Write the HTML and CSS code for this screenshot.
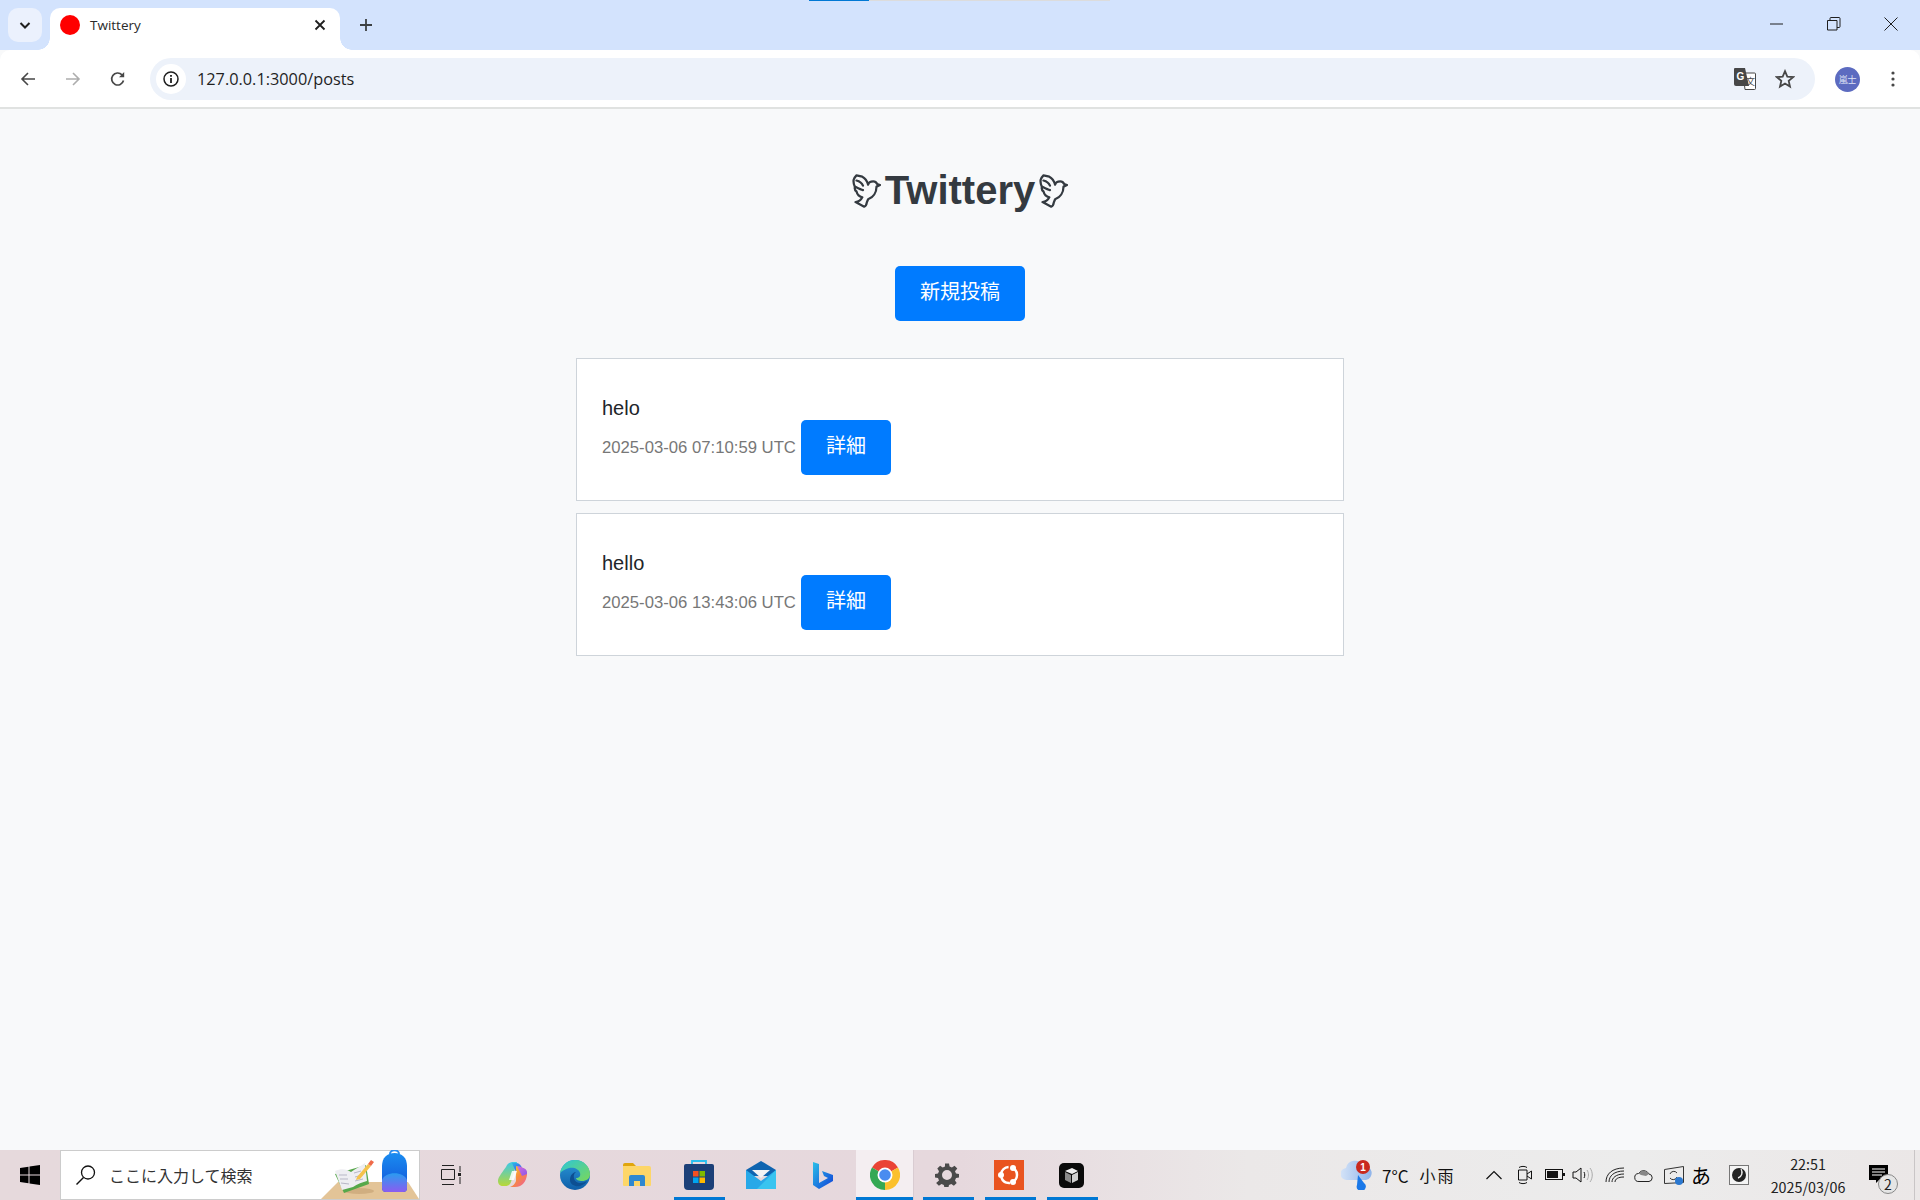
FILE: index.html
```html
<!DOCTYPE html>
<html lang="ja">
<head>
<meta charset="utf-8">
<title>Twittery</title>
<link rel="stylesheet" href="styles.css">
</head>
<body>
<div class="screen">
  <header class="chrome">
    <div class="tabstrip">
      <button class="tab-search">
        <svg width="16" height="16" viewBox="0 0 16 16"><path d="M3.500 6l4.500 4.500L12.500 6" fill="none" stroke="#1f1f1f" stroke-width="2"/></svg>
      </button>
      <div class="tab">
        <span class="favicon"></span>
        <span class="tab-title">Twittery</span>
        <svg class="tab-close" width="14" height="14" viewBox="0 0 14 14"><path d="M2.500 2.500l9 9M11.500 2.500l-9 9" stroke="#1f1f1f" stroke-width="1.800"/></svg>
      </div>
      <svg class="new-tab" width="16" height="16" viewBox="0 0 16 16"><path d="M8 2v12M2 8h12" stroke="#3c4043" stroke-width="1.800"/></svg>
      <div class="window-controls">
        <svg width="14" height="14" viewBox="0 0 14 14"><path d="M0 7h13" stroke="#1f1f1f" stroke-width="1"/></svg>
        <svg width="14" height="14" viewBox="0 0 14 14"><path d="M.5 3.500h9.500v9.500h-9.500zM3 3.500V1.500a1 1 0 0 1 1-1h8a1 1 0 0 1 1 1v8a1 1 0 0 1-1 1h-2" fill="none" stroke="#1f1f1f"/></svg>
        <svg width="14" height="14" viewBox="0 0 14 14"><path d="M.5.500l13 13M13.500.500l-13 13" stroke="#1f1f1f" stroke-width="1"/></svg>
      </div>
      <div class="sysbar"><span class="sysbar-blue"></span><span class="sysbar-gray"></span></div>
    </div>
    <div class="toolbar">
      <div class="nav-buttons">
        <svg width="16" height="16" viewBox="0 0 16 16"><path d="M15 8H2M8 2L2 8l6 6" fill="none" stroke="#474747" stroke-width="1.600"/></svg>
        <svg width="16" height="16" viewBox="0 0 16 16"><path d="M1 8h13M8 2l6 6-6 6" fill="none" stroke="#adadad" stroke-width="1.600"/></svg>
        <svg width="16" height="16" viewBox="0 0 16 16"><path d="M13.500 9.500A6 6 0 1 1 12 3.800" fill="none" stroke="#474747" stroke-width="1.700"/><path d="M14.200 1v5.200H9z" fill="#474747"/></svg>
      </div>
      <div class="omnibox">
        <span class="site-info">
          <svg width="16" height="16" viewBox="0 0 16 16"><circle cx="8" cy="8" r="7" fill="none" stroke="#1f1f1f" stroke-width="1.500"/><path d="M8 7v5M8 4v1.800" stroke="#1f1f1f" stroke-width="1.800"/></svg>
        </span>
        <span class="url">127.0.0.1:3000/posts</span>
        <svg class="translate" width="22" height="22" viewBox="0 0 22 22">
          <path d="M9 5h11.500a1 1 0 0 1 1 1v14.500a1 1 0 0 1-1 1H11z" fill="#fff" stroke="#474747"/>
          <path d="M1 0h10l4 18H2a2 2 0 0 1-2-2V1a1 1 0 0 1 1-1z" fill="#474747"/>
          <text x="2.500" y="12" class="translate-g">G</text>
          <text x="12" y="17" class="translate-k">文</text>
        </svg>
        <svg class="star" width="20" height="20" viewBox="0 0 20 20"><path d="M10 2.200l2.300 5.400 5.800.500-4.400 3.800 1.300 5.700-5-3-5 3 1.300-5.700-4.400-3.800 5.800-.500z" fill="none" stroke="#474747" stroke-width="1.800"/></svg>
      </div>
      <span class="avatar">嵐士</span>
      <svg class="kebab" width="4" height="16" viewBox="0 0 4 16"><circle cx="2" cy="2" r="1.600" fill="#474747"/><circle cx="2" cy="8" r="1.600" fill="#474747"/><circle cx="2" cy="14" r="1.600" fill="#474747"/></svg>
    </div>
  </header>

  <main class="page">
    <h1 class="title">
      <svg class="dove" width="29" height="34" viewBox="0 0 90 105"><path d="M14 4L32 8C42 13 47 22 50 33C52 26 58 23 66 23C72 23 76 27 78 31L87 34L76 39C76 56 66 72 50 78L46 88C45 95 42 100 38 101L11 87C22 86 28 80 32 72C22 70 16 62 14 54C8 50 8 44 9 40C6 34 4 26 5 18C6 12 10 8 14 4ZM14 20C22 22 30 26 34 36M12 40C20 44 28 48 34 50" fill="none" stroke="#343a40" stroke-width="7" stroke-linejoin="round" stroke-linecap="round"/></svg>
      <span class="title-text">Twittery</span>
      <svg class="dove" width="29" height="34" viewBox="0 0 90 105"><path d="M14 4L32 8C42 13 47 22 50 33C52 26 58 23 66 23C72 23 76 27 78 31L87 34L76 39C76 56 66 72 50 78L46 88C45 95 42 100 38 101L11 87C22 86 28 80 32 72C22 70 16 62 14 54C8 50 8 44 9 40C6 34 4 26 5 18C6 12 10 8 14 4ZM14 20C22 22 30 26 34 36M12 40C20 44 28 48 34 50" fill="none" stroke="#343a40" stroke-width="7" stroke-linejoin="round" stroke-linecap="round"/></svg>
    </h1>
    <a class="btn btn-new">新規投稿</a>
    <section class="posts">
      <article class="post">
        <p class="post-body">helo</p>
        <div class="post-meta">
          <time class="post-time">2025-03-06 07:10:59 UTC</time>
          <a class="btn btn-detail">詳細</a>
        </div>
      </article>
      <article class="post">
        <p class="post-body">hello</p>
        <div class="post-meta">
          <time class="post-time">2025-03-06 13:43:06 UTC</time>
          <a class="btn btn-detail">詳細</a>
        </div>
      </article>
    </section>
  </main>

  <footer class="taskbar">
    <div class="start">
      <svg width="20" height="20" viewBox="0 0 20 20"><path d="M0 3l8.500-1.200v7.700H0zM9.500 1.600L20 0v9.500H9.500zM0 10.500h8.500v7.700L0 17zM9.500 10.500H20V20L9.500 18.400z" fill="#000"/></svg>
    </div>
    <div class="search">
      <svg class="search-icon" width="22" height="22" viewBox="0 0 22 22"><circle cx="13" cy="8.500" r="6.500" fill="none" stroke="#111" stroke-width="1.300"/><path d="M8.500 13.500L1.500 20.500" stroke="#111" stroke-width="1.500"/></svg>
      <span class="search-text">ここに入力して検索</span>
      <svg class="search-art" width="98" height="49" viewBox="0 0 98 49">
        <defs>
          <linearGradient id="bag" x1="0" y1="0" x2="0" y2="1"><stop offset="0" stop-color="#1a8cf0"/><stop offset="1" stop-color="#1250d8"/></linearGradient>
          <linearGradient id="pocket" x1="0" y1="0" x2="0" y2="1"><stop offset="0" stop-color="#2a9cf0"/><stop offset="1" stop-color="#8b5cf0"/></linearGradient>
        </defs>
        <path d="M17 32h70l11 17H0z" fill="#e3c497"/>
        <ellipse cx="38" cy="41" rx="15" ry="3" fill="#d0ae80"/>
        <path d="M14 24L45 15L48 34L23 43z" fill="#56a84a"/>
        <path d="M14 21C20 18 26 19 30 22C34 19 40 16 44 13L46 31C42 32 36 34 32 37L21 40z" fill="#eeeef2"/>
        <path d="M18 25l8 0M19 29l8 0M20 33l8 1M33 23l7-2M34 27l7-2M34 31l8-2" stroke="#b7b7c6" stroke-width="1"/>
        <path d="M36 27l11-13 3 2-11 13-4 1z" fill="#f5c24c"/>
        <path d="M47 14l3-4 3 2-3 4z" fill="#ef6a4a"/>
        <path d="M61 16c0-8 5-13 12.500-13s12.500 5 12.500 13v22c0 3-2 4-4 4H65c-2 0-4-1-4-4z" fill="url(#bag)"/>
        <path d="M69 4c0-5 9-5 9 0" fill="none" stroke="#2a8cf0" stroke-width="2"/>
        <path d="M61 30c3-9 22-9 25 0v8c0 3-2 4-4 4H65c-2 0-4-1-4-4z" fill="url(#pocket)"/>
      </svg>
    </div>
    <div class="apps">
      <div class="app">
        <svg width="20" height="20" viewBox="0 0 20 20"><path d="M1 .500h12M1 19.500h12M.5 4.500h13v10H.5zM19 1v6M19 12v7" fill="none" stroke="#222" stroke-width="1"/><rect x="17" y="8" width="3" height="3" fill="#222"/></svg>
      </div>
      <div class="app">
        <svg width="30" height="26" viewBox="0 0 30 26">
          <defs>
            <linearGradient id="cp1" x1="0" y1="0" x2="1" y2="1"><stop offset="0" stop-color="#2bb8e8"/><stop offset=".5" stop-color="#3a7bea"/><stop offset="1" stop-color="#6f4bd8"/></linearGradient>
            <linearGradient id="cp2" x1="0" y1="0" x2="1" y2="1"><stop offset="0" stop-color="#f5d33c"/><stop offset=".5" stop-color="#f78a3c"/><stop offset="1" stop-color="#ee5aa8"/></linearGradient>
            <linearGradient id="cp3" x1="0" y1="0" x2="0" y2="1"><stop offset="0" stop-color="#3cc8e8"/><stop offset="1" stop-color="#b9d838"/></linearGradient>
            <linearGradient id="cp4" x1="0" y1="0" x2="1" y2="1"><stop offset="0" stop-color="#d86be0"/><stop offset="1" stop-color="#8a56e8"/></linearGradient>
          </defs>
          <path d="M8 5C10 1 12 0 16 0h3l-6 20c-1 3-3 4-6 4H5C2 24 0 22 0 19c0-3 2-6 8-14z" fill="url(#cp3)"/>
          <path d="M14 1h4c3 0 5 2 6 5l1 4h-7z" fill="url(#cp1)"/>
          <path d="M18 4c4 1 12 2 11 9-1 6-4 12-12 12h-5c3-1 5-3 6-6z" fill="url(#cp2)"/>
          <path d="M19 4c4 1 11 2 10 8l-5 2z" fill="url(#cp4)"/>
          <path d="M14 9h5l-3 9h-5z" fill="#fff" opacity=".85"/>
        </svg>
      </div>
      <div class="app">
        <svg width="30" height="30" viewBox="0 0 30 30">
          <defs>
            <linearGradient id="ed1" x1="0" y1="0" x2="1" y2="1"><stop offset="0" stop-color="#2cc6d8"/><stop offset="1" stop-color="#7ad858"/></linearGradient>
            <linearGradient id="ed2" x1="0" y1="0" x2="0" y2="1"><stop offset="0" stop-color="#2a98d8"/><stop offset="1" stop-color="#0f5ea8"/></linearGradient>
          </defs>
          <circle cx="15" cy="15" r="15" fill="url(#ed2)"/>
          <path d="M0 13C2 4 8 0 15 0c9 0 15 7 15 14 0 5-4 7-8 7-3 0-6-1-6-3 3 0 5-2 4-5-1-4-6-6-11-5-4 1-7 3-9 5z" fill="url(#ed1)"/>
          <path d="M10 20c0 5 6 7 10 6 3-1 6-3 7-5-5 3-12 3-13-3-1-4 2-7 4-6-4-1-8 3-8 8z" fill="#0d4f92"/>
        </svg>
      </div>
      <div class="app">
        <svg width="28" height="24" viewBox="0 0 28 24"><path d="M0 2a2 2 0 0 1 2-2h8l3 3h-13z" fill="#e0a50c"/><path d="M0 3h26a2 2 0 0 1 2 2v17a1 1 0 0 1-1 1H1a1 1 0 0 1-1-1z" fill="#fdd668"/><path d="M6 23v-9a2 2 0 0 1 2-2h12a2 2 0 0 1 2 2v9h-5v-5h-6v5z" fill="#2f88d0"/></svg>
      </div>
      <div class="app">
        <svg width="30" height="30" viewBox="0 0 30 30"><path d="M8 4V1h14v3" fill="none" stroke="#2ac0f0" stroke-width="1.800"/><path d="M0 6a2 2 0 0 1 2-2h26a2 2 0 0 1 2 2v20a4 4 0 0 1-4 4H4a4 4 0 0 1-4-4z" fill="#1c4078"/><rect x="9" y="11" width="5.500" height="5.500" fill="#f25022"/><rect x="15.500" y="11" width="5.500" height="5.500" fill="#7fba00"/><rect x="9" y="17.500" width="5.500" height="5.500" fill="#00a4ef"/><rect x="15.500" y="17.500" width="5.500" height="5.500" fill="#ffb900"/></svg>
      </div>
      <div class="app">
        <svg width="30" height="28" viewBox="0 0 30 28"><path d="M0 9L15 0l15 9v6H0z" fill="#0f64b0"/><path d="M6 9h18l-9 8z" fill="#f2f3f5"/><path d="M0 9l15 11L30 9v19H0z" fill="#27a8e8"/><path d="M30 9v19H11z" fill="#38c4f0"/></svg>
      </div>
      <div class="app">
        <svg width="20" height="27" viewBox="0 0 20 27"><defs><linearGradient id="bg1" x1="0" y1="0" x2="1" y2="1"><stop offset="0" stop-color="#2ac0e8"/><stop offset="1" stop-color="#1040d8"/></linearGradient></defs><path d="M0 0l6 2v19l9-5-4-2-2-5 11 4v6L6 27 0 23z" fill="url(#bg1)"/></svg>
      </div>
      <div class="app app-chrome">
        <svg width="30" height="30" viewBox="0 0 30 30">
          <path d="M15 15L2 7.500A15 15 0 0 1 28 7.500z" fill="#ea4335"/>
          <path d="M15 15l13-7.500A15 15 0 0 1 15 30z" fill="#fbc02d"/>
          <path d="M15 15v15A15 15 0 0 1 2 7.500z" fill="#34a853"/>
          <circle cx="15" cy="15" r="7.500" fill="#fff"/>
          <circle cx="15" cy="15" r="5.800" fill="#4a8cf0"/>
        </svg>
      </div>
      <div class="app app-run">
        <svg width="24" height="24" viewBox="0 0 24 24"><path d="M10 1h4l.6 3 2.300 1 2.600-1.700 2.800 2.800L20 8.700l1 2.300 3 .6v3.400l-3 .6-1 2.300 1.700 2.600-2.800 2.800-2.600-1.700-2.300 1-.6 2.400h-4l-.6-2.400-2.300-1-2.600 1.700-2.800-2.800L4 17.900 3 15.600l-3-.6v-3.400l3-.6 1-2.300-1.700-2.600 2.800-2.800 2.600 1.700 2.300-1zM12 7.500a5 5 0 1 0 0 10 5 5 0 0 0 0-10z" fill="#4a4a4a" fill-rule="evenodd" transform="translate(0 -.500)"/></svg>
      </div>
      <div class="app app-run">
        <svg width="30" height="30" viewBox="0 0 30 30"><rect width="30" height="30" fill="#e95420"/><circle cx="15" cy="15" r="8" fill="none" stroke="#fff" stroke-width="2.500" stroke-dasharray="11 3.500" stroke-dashoffset="3"/><circle cx="7" cy="15" r="3" fill="#fff"/><circle cx="19" cy="8" r="3" fill="#fff"/><circle cx="19" cy="22" r="3" fill="#fff"/></svg>
      </div>
      <div class="app app-run">
        <svg width="25" height="25" viewBox="0 0 25 25"><rect width="25" height="25" rx="5" fill="#0a0a0a"/><path d="M6 8l7-3 6 3-6 3z" fill="#eee"/><path d="M6 9l6 3v8l-6-3z" fill="#8a8a8a"/><path d="M19 9l-6 3v8l6-3z" fill="#d0d0d0"/></svg>
      </div>
    </div>
    <div class="tray">
      <div class="weather">
        <svg width="32" height="30" viewBox="0 0 32 30">
          <defs><linearGradient id="cl" x1="0" y1="0" x2="1" y2="0"><stop offset="0" stop-color="#d4e3f7"/><stop offset="1" stop-color="#8fb4ea"/></linearGradient></defs>
          <path d="M6 20a6 6 0 0 1-1-12 9 9 0 0 1 17-2 7 7 0 0 1 3 14z" fill="url(#cl)"/>
          <path d="M17 15l6 8a4.500 4.500 0 1 1-7 2z" fill="#1a78e8"/>
          <circle cx="22" cy="7" r="7" fill="#c9291e"/>
          <text x="22" y="11" class="weather-badge">1</text>
        </svg>
        <span class="temp">7°C</span>
        <span class="cond">小雨</span>
      </div>
      <div class="tray-icons">
        <svg width="16" height="16" viewBox="0 0 16 16"><path d="M.5 12L8 4.500 15.500 12" fill="none" stroke="#111" stroke-width="1.200"/></svg>
        <svg width="16" height="20" viewBox="0 0 16 20"><path d="M1.500 5h8.500v10H1.500zM10 9l4.500-3v8L10 11" fill="none" stroke="#111"/><path d="M2 2.500c2-1.500 6-1.500 8 0M2 17.500c2 1.500 6 1.500 8 0" fill="none" stroke="#111"/></svg>
        <svg width="20" height="12" viewBox="0 0 20 12"><rect x=".5" y=".5" width="17" height="10" fill="none" stroke="#111"/><rect x="2" y="2" width="11" height="7" fill="#111"/><rect x="18" y="4" width="2" height="3" fill="#111"/></svg>
        <svg width="22" height="18" viewBox="0 0 22 18"><path d="M1 6h3l5-4v14l-5-4H1z" fill="none" stroke="#111"/><path d="M12 6c1 2 1 4 0 6" fill="none" stroke="#111"/><path d="M15 4c2 3 2 7 0 10M18 2c3 4 3 10 0 14" fill="none" stroke="#aaa"/></svg>
        <svg width="20" height="16" viewBox="0 0 20 16"><path d="M1 15C1 7 7 1 19 1M4 15C4 9 9 4 19 4M7 15c0-4 4-8 12-8M10 15c0-3 3-5 9-5" fill="none" stroke="#222" stroke-width="1"/></svg>
        <svg width="20" height="13" viewBox="0 0 20 13"><path d="M5 12.500a4 4 0 0 1-.5-8A6 6 0 0 1 15 5a3.800 3.800 0 0 1 0 7.500z" fill="#eee" stroke="#222"/><path d="M4.500 4.500A6 6 0 0 1 15 5l-3 2-5-1z" fill="#888"/></svg>
        <svg width="20" height="19" viewBox="0 0 20 19"><path d="M.5 3.500L19.500.500v16L.5 17.500z" fill="none" stroke="#333"/><path d="M6 8a4 4 0 0 1 7-1M13 11a4 4 0 0 1-7 1" fill="none" stroke="#333"/><circle cx="15" cy="15" r="4" fill="#2b78d0"/></svg>
        <span class="ime">あ</span>
        <svg width="20" height="20" viewBox="0 0 20 20"><rect x=".5" y=".5" width="19" height="19" fill="#f4f4f4" stroke="#777"/><circle cx="10" cy="10" r="7" fill="#222"/><path d="M12 4c2 3 1 8-3 9" fill="none" stroke="#eee" stroke-width="1.300"/></svg>
      </div>
      <div class="clock"><span>22:51</span><span>2025/03/06</span></div>
      <div class="notify">
        <svg width="19" height="18" viewBox="0 0 19 18"><path d="M0 0h19v15h-9l-3 3v-3H0z" fill="#000"/><path d="M3 4h13M3 7h13M3 10h10" stroke="#fff"/></svg>
        <span class="notify-badge">2</span>
      </div>
      <div class="show-desktop"></div>
    </div>
  </footer>
</div>
</body>
</html>
```

FILE: styles.css
```css
* { box-sizing: border-box; }
html, body { margin: 0; padding: 0; height: 100%; }
body { font-family: "Liberation Sans", Arial, "Noto Sans CJK JP", sans-serif; background: #f8f9fa; }
.screen { width: 1920px; height: 1200px; display: flex; flex-direction: column; overflow: hidden; }

/* browser frame */
.chrome { flex: 0 0 109px; display: flex; flex-direction: column; }
.tabstrip { flex: 0 0 50px; background: #d3e3fd; display: flex; align-items: flex-start; padding: 8px 0 0 8px; position: relative; }
.tab-search { width: 34px; height: 34px; border: 0; padding: 0; border-radius: 10px; background: #ebf1fd; display: flex; align-items: center; justify-content: center; }
.tab { position: relative; width: 290px; height: 42px; margin-left: 8px; background: #fff; border-radius: 10px 10px 0 0; display: flex; align-items: center; padding: 0 13px 8px 10px; }
.tab::before, .tab::after { content: ""; position: absolute; bottom: 0; width: 12px; height: 12px; }
.tab::before { left: -12px; background: radial-gradient(circle at 0 0, transparent 11.500px, #fff 12px); }
.tab::after { right: -12px; background: radial-gradient(circle at 100% 0, transparent 11.500px, #fff 12px); }
.favicon { width: 20px; height: 20px; border-radius: 50%; background: #ff0000; }
.tab-title { margin-left: 10px; flex: 1; font: 13.500px "Open Sans", "Noto Sans", sans-serif; color: #2a2a2a; }
.new-tab { margin: 9px 0 0 18px; }
.window-controls { margin-left: auto; width: 170px; display: flex; justify-content: space-between; padding: 9px 22px 0 20px; }
.sysbar { position: absolute; top: 0; left: 809px; display: flex; height: 1px; }
.sysbar-blue { width: 60px; background: #0078d4; }
.sysbar-gray { width: 241px; background: #dcdcdc; }

.toolbar { flex: 0 0 59px; background: #fff; border-bottom: 2px solid #e0e2e1; border-radius: 10px 10px 0 0; display: flex; align-items: center; padding: 1px 0 0 0; }
.nav-buttons { width: 150px; display: flex; justify-content: space-between; padding: 0 24px 0 20px; }
.omnibox { width: 1665px; height: 42px; background: #edf2fa; border-radius: 21px; display: flex; align-items: center; padding-left: 6px; }
.site-info { width: 30px; height: 30px; border-radius: 50%; background: #fff; display: flex; align-items: center; justify-content: center; }
.url { margin-left: 11px; flex: 1; font: 16.300px "Open Sans", "Noto Sans", sans-serif; color: #1f1f1f; }
.translate-g { font: bold 10px "Liberation Sans", sans-serif; fill: #fff; }
.translate-k { font: 9px "Noto Sans CJK JP", sans-serif; fill: #474747; }
.star { margin: 0 20px 0 19px; }
.avatar { width: 25px; height: 25px; margin-left: 20px; border-radius: 50%; background: #5c6bc0; color: #dfe3f5; font: 9px/25px "Noto Sans CJK JP", sans-serif; text-align: center; white-space: nowrap; letter-spacing: -.2px; }
.kebab { margin-left: 31px; }

/* page */
.page { flex: 1; display: flex; flex-direction: column; align-items: center; background: #f8f9fa; padding-top: 57px; }
.title { margin: 0; display: flex; align-items: center; gap: 4px; font: bold 40px/46px "Liberation Sans", sans-serif; color: #343a40; height: 46px; }
.title-text { position: relative; top: 1px; }
.dove { margin-top: 3px; }
.btn { display: block; background: #007bff; color: #fff; border-radius: 5px; padding: 12px 25px 18px; font: 20px/25px "Noto Sans CJK JP", sans-serif; white-space: nowrap; }
.btn-new { margin-top: 54px; width: 130px; text-align: center; }
.posts { margin-top: 37px; width: 768px; display: flex; flex-direction: column; gap: 12px; }
.post { height: 143px; background: #fff; border: 1px solid #ced4da; padding: 25px 25px 0; }
.post-body { margin: 0; font-size: 20px; line-height: 24px; color: #212529; padding-top: 12px; height: 36px; }
.post-meta { display: flex; align-items: center; gap: 5px; }
.post-time { font-size: 16.700px; color: #777; }

/* taskbar */
.taskbar { flex: 0 0 50px; display: flex; background: linear-gradient(90deg, #e6d9dc 0, #e6d8dd 50%, #ebe8e8 65%, #ececec 85%, #ebe7e7 100%); }
.start { width: 60px; display: flex; align-items: center; justify-content: center; }
.search { position: relative; width: 360px; background: #fff; border: 1px solid #ccc; display: flex; align-items: center; padding-left: 14px; }
.search-text { margin-left: 12px; font: 16px "Noto Sans CJK JP", sans-serif; color: #333; }
.search-art { position: absolute; right: 0; bottom: 0; }
.apps { display: flex; }
.app { position: relative; width: 62px; display: flex; align-items: center; justify-content: center; }
.app:nth-child(5)::after, .app-run::after, .app-chrome::after { content: ""; position: absolute; bottom: 0; left: 6px; width: 51px; height: 3px; background: #0078d4; }
.app-chrome { background: linear-gradient(90deg, transparent 2px, #f4eef1 2px, #f4eef1 59px, #d9ccd2 59px, #d9ccd2 60px, transparent 60px); }
.app-chrome::after { left: 2px; width: 57px; }
.app-run::after { left: 7px; }
.tray { margin-left: auto; display: flex; align-items: center; }
.weather { display: flex; align-items: center; width: 150px; height: 100%; padding-left: 5px; font: 17px "Noto Sans CJK JP", sans-serif; color: #111; }
.temp { margin-left: 9px; }
.cond { margin-left: 11px; font-size: 16px; letter-spacing: 2px; }
.weather-badge { font: bold 10px "Liberation Sans", sans-serif; fill: #fff; text-anchor: middle; }
.tray-icons { width: 263px; display: flex; align-items: center; }
.tray-icons > :nth-child(2) { margin-left: 15px; }
.tray-icons > :nth-child(3) { margin-left: 12px; }
.tray-icons > :nth-child(4) { margin-left: 7px; }
.tray-icons > :nth-child(5) { margin-left: 11px; }
.tray-icons > :nth-child(6) { margin-left: 9px; }
.tray-icons > :nth-child(7) { margin-left: 10px; }
.tray-icons > :nth-child(8) { margin-left: 7px; }
.tray-icons > :nth-child(9) { margin-left: 18px; }
.ime { width: 20px; text-align: center; font: 20px "Noto Sans CJK JP", sans-serif; color: #000; }
.clock { width: 76px; margin-left: 21px; display: flex; flex-direction: column; align-items: center; gap: 4px; padding-bottom: 1px; font: 14.300px/19px "Noto Sans CJK JP", sans-serif; color: #222; white-space: nowrap; }
.notify { position: relative; margin-left: 23px; width: 45px; height: 100%; padding-top: 15px; }
.notify-badge { position: absolute; left: 9px; top: 24px; width: 20px; height: 20px; border-radius: 50%; border: 1px solid #888; background: #e5e5e5; font: 14px/18px "Noto Sans CJK JP", sans-serif; text-align: center; color: #222; }
.show-desktop { width: 1px; height: 100%; background: #c9c5c6; margin-right: 5px; }
```
